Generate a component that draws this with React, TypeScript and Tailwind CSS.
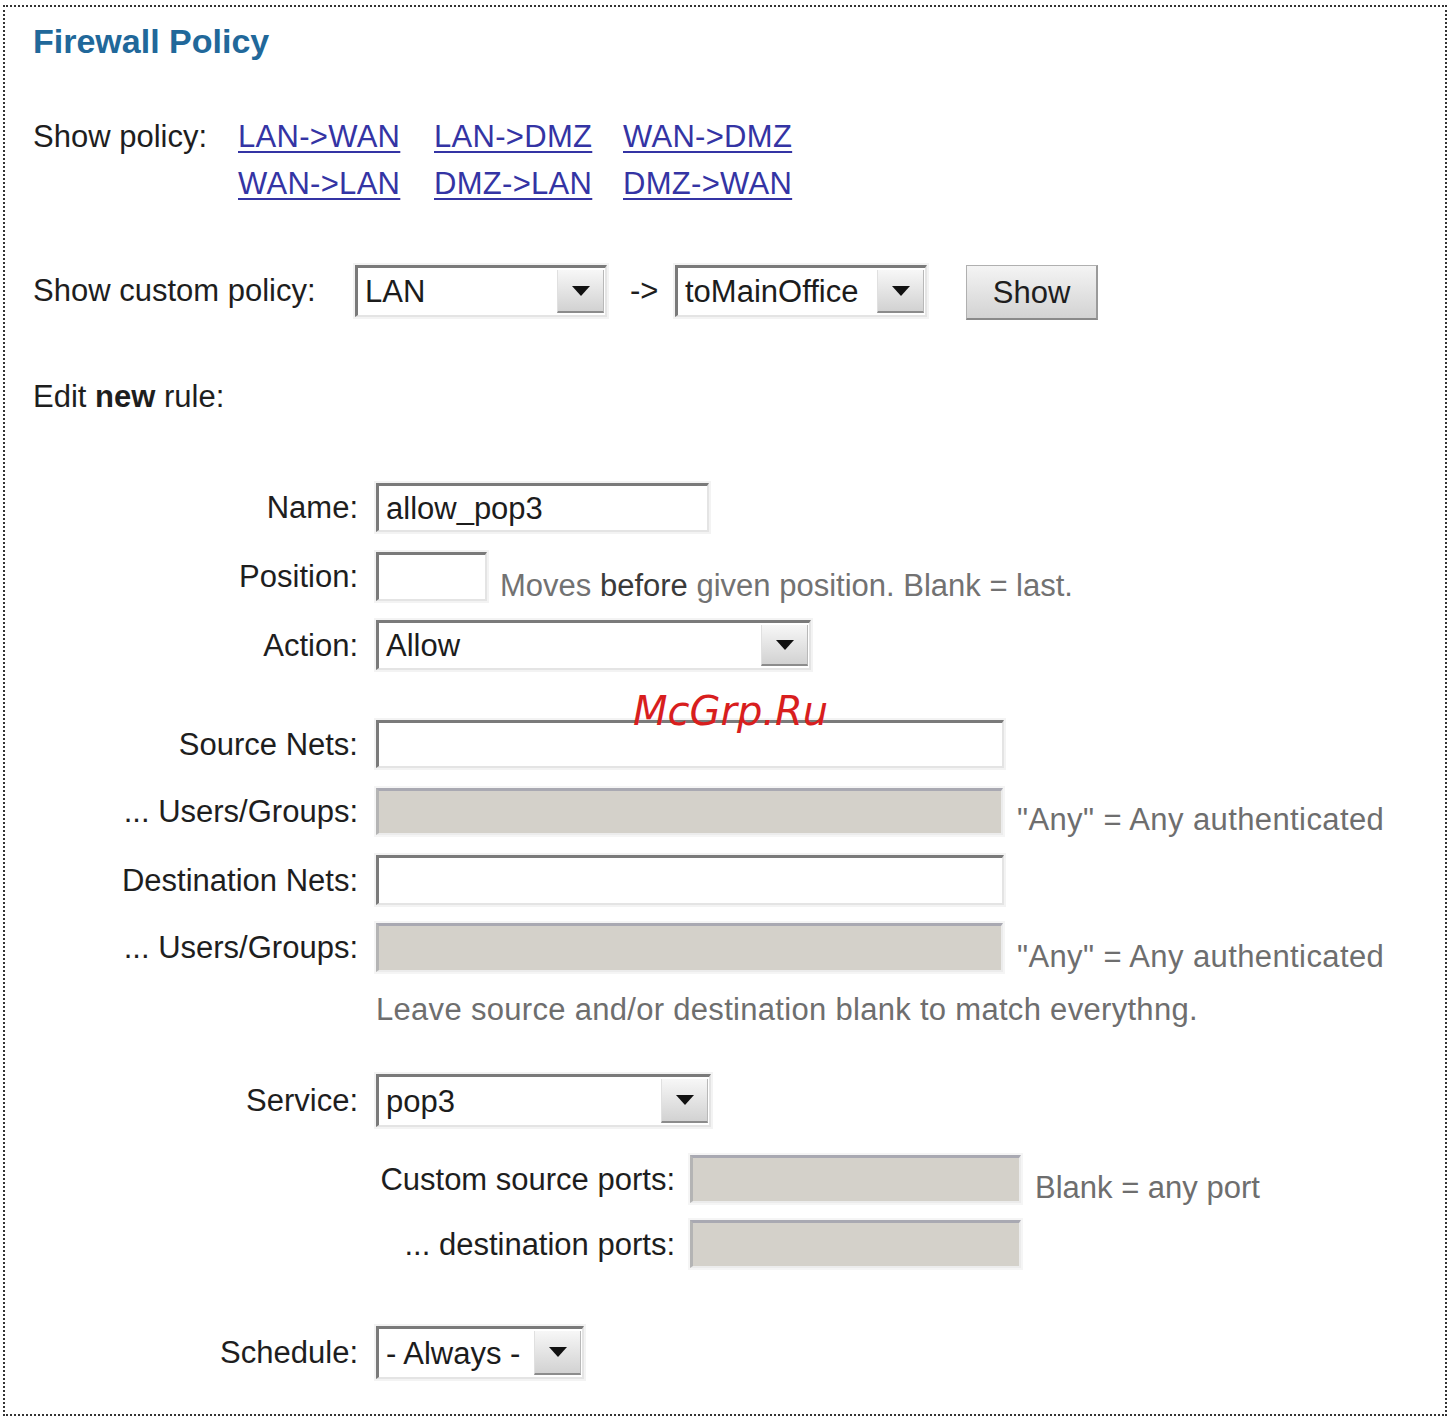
import React from "react";

const inset =
  "border-t-[3px] border-l-[3px] border-b-2 border-r-2 border-t-[#7a7a7a] border-l-[#7a7a7a] border-b-[#e4e4e4] border-r-[#e4e4e4] shadow-[0_0_0_2px_#f3f3f3]";
const insetDisabled =
  "border-t-[3px] border-l-[3px] border-b-2 border-r-2 border-t-[#a9a9b2] border-l-[#b4b4b4] border-b-[#ececec] border-r-[#ececec] shadow-[0_0_0_2px_#f5f5f5]";

function Tri() {
  return (
    <svg width="18" height="10" viewBox="0 0 18 10">
      <polygon points="0,0 18,0 9,10" fill="#111" />
    </svg>
  );
}

function Select({ value, className }: { value: string; className: string }) {
  return (
    <div className={`flex items-stretch bg-white ${inset} ${className}`}>
      <div className="flex-1 flex items-center pl-[7px] text-[31px] leading-none text-[#1c1c1c] whitespace-nowrap overflow-hidden">
        {value}
      </div>
      <div className="w-[47px] my-[2px] mr-[1px] flex items-center justify-center bg-gradient-to-b from-[#f7f7f7] to-[#d2d2d2] border-l border-l-[#e0e0e0] border-b-2 border-b-[#8c8c8c] border-r border-r-[#b8b8b8]">
        <Tri />
      </div>
    </div>
  );
}

function Label({ children }: { children: React.ReactNode }) {
  return (
    <div className="w-[325px] shrink-0 text-right text-[31px] leading-[31px] text-[#1e1e1e] whitespace-nowrap">
      {children}
    </div>
  );
}

export default function App() {
  return (
    <div className="w-[1452px] h-[1420px] bg-white pt-[5px] pl-[3px] font-['Liberation_Sans',Arial,sans-serif]">
      <div className="relative w-[1444px] h-[1411px] border-2 border-dotted border-[#333] pl-[28px]">
        <div className="pt-[17px] text-[34px] leading-[34px] font-bold text-[#21689a]">
          Firewall Policy
        </div>

        {/* Show policy links */}
        <div className="mt-[55px] flex text-[31px] leading-[47px]">
          <div className="w-[205px] shrink-0 text-[#1e1e1e]">Show policy:</div>
          <div className="grid grid-cols-[196px_189px_auto] text-[#3434a4] tracking-[0.3px]">
            <a className="underline decoration-2 underline-offset-[4px] w-fit" href="#">LAN-&gt;WAN</a>
            <a className="underline decoration-2 underline-offset-[4px] w-fit" href="#">LAN-&gt;DMZ</a>
            <a className="underline decoration-2 underline-offset-[4px] w-fit" href="#">WAN-&gt;DMZ</a>
            <a className="underline decoration-2 underline-offset-[4px] w-fit" href="#">WAN-&gt;LAN</a>
            <a className="underline decoration-2 underline-offset-[4px] w-fit" href="#">DMZ-&gt;LAN</a>
            <a className="underline decoration-2 underline-offset-[4px] w-fit" href="#">DMZ-&gt;WAN</a>
          </div>
        </div>

        {/* Show custom policy */}
        <div className="mt-[58px] flex items-start text-[31px] text-[#1e1e1e]">
          <div className="w-[322px] shrink-0 leading-[52px] whitespace-nowrap">Show custom policy:</div>
          <Select value="LAN" className="w-[252px] h-[52px]" />
          <div className="ml-[23px] w-[25px] leading-[52px] whitespace-nowrap">-&gt;</div>
          <Select value="toMainOffice" className="ml-[20px] w-[252px] h-[52px]" />
          <button className="ml-[39px] w-[132px] h-[55px] flex items-center justify-center bg-gradient-to-b from-[#f4f4f4] to-[#d3d3d3] border border-[#b0b0b0] border-b-2 border-b-[#8a8a8a] border-r-2 border-r-[#9a9a9a] text-[31px] leading-none text-[#1e1e1e]">
            Show
          </button>
        </div>

        <div className="mt-[61px] text-[31px] leading-[31px] text-[#1e1e1e]">
          Edit <span className="font-bold">new</span> rule:
        </div>

        {/* Form */}
        <div className="mt-[71px] flex flex-col">
          <div className="flex items-center h-[49px]">
            <Label>Name:</Label>
            <div className={`ml-[18px] w-[333px] h-[49px] bg-white flex items-center pl-[7px] text-[31px] leading-none text-[#1c1c1c] ${inset}`}>
              allow_pop3
            </div>
          </div>

          <div className="mt-[20px] flex items-center h-[49px]">
            <Label>Position:</Label>
            <div className={`ml-[18px] w-[111px] h-[49px] bg-white ${inset}`} />
            <div className="ml-[13px] self-end text-[31px] leading-[31px] text-[#727272] whitespace-nowrap">
              Moves <span className="text-[#3a3a3a]">before</span> given position. Blank = last.
            </div>
          </div>

          <div className="mt-[19px] flex items-center h-[50px]">
            <Label>Action:</Label>
            <Select value="Allow" className="ml-[18px] w-[435px] h-[50px]" />
          </div>

          <div className="mt-[50px] flex items-center h-[48px]">
            <Label>Source Nets:</Label>
            <div className={`ml-[18px] w-[628px] h-[48px] bg-white ${inset}`} />
          </div>

          <div className="mt-[20px] flex items-center h-[47px]">
            <Label>... Users/Groups:</Label>
            <div className={`ml-[18px] w-[627px] h-[47px] bg-[#d4d1ca] ${insetDisabled}`} />
            <div className="ml-[14px] self-end text-[31px] leading-[31px] text-[#6e6e6e] whitespace-nowrap tracking-[0.4px]">
              "Any" = Any authenticated
            </div>
          </div>

          <div className="mt-[20px] flex items-center h-[50px]">
            <Label>Destination Nets:</Label>
            <div className={`ml-[18px] w-[628px] h-[50px] bg-white ${inset}`} />
          </div>

          <div className="mt-[18px] flex items-center h-[49px]">
            <Label>... Users/Groups:</Label>
            <div className={`ml-[18px] w-[627px] h-[49px] bg-[#d4d1ca] ${insetDisabled}`} />
            <div className="ml-[14px] self-end text-[31px] leading-[31px] text-[#6e6e6e] whitespace-nowrap tracking-[0.4px]">
              "Any" = Any authenticated
            </div>
          </div>

          <div className="mt-[22px] ml-[343px] text-[31px] leading-[31px] text-[#6e6e6e] whitespace-nowrap tracking-[0.3px]">
            Leave source and/or destination blank to match everythng.
          </div>

          <div className="mt-[49px] flex items-center h-[53px]">
            <Label>Service:</Label>
            <Select value="pop3" className="ml-[18px] w-[335px] h-[53px]" />
          </div>

          <div className="ml-[343px] mt-[28px] flex flex-col">
            <div className="flex items-center h-[48px]">
              <div className="w-[299px] shrink-0 text-right text-[31px] leading-[31px] text-[#1e1e1e] whitespace-nowrap">
                Custom source ports:
              </div>
              <div className={`ml-[15px] w-[331px] h-[48px] bg-[#d4d1ca] ${insetDisabled}`} />
              <div className="ml-[14px] self-end text-[31px] leading-[31px] text-[#6e6e6e] whitespace-nowrap">
                Blank = any port
              </div>
            </div>
            <div className="mt-[17px] flex items-center h-[48px]">
              <div className="w-[299px] shrink-0 text-right text-[31px] leading-[31px] text-[#1e1e1e] whitespace-nowrap">
                ... destination ports:
              </div>
              <div className={`ml-[15px] w-[331px] h-[48px] bg-[#d4d1ca] ${insetDisabled}`} />
            </div>
          </div>

          <div className="mt-[58px] flex items-center h-[53px]">
            <Label>Schedule:</Label>
            <Select value="- Always -" className="ml-[18px] w-[208px] h-[53px]" />
          </div>
        </div>

        <div className="absolute left-[628px] top-[684px] text-[40px] leading-none italic text-[#d81e1e] font-['DejaVu_Sans',sans-serif] whitespace-nowrap">
          McGrp.Ru
        </div>
      </div>
    </div>
  );
}
